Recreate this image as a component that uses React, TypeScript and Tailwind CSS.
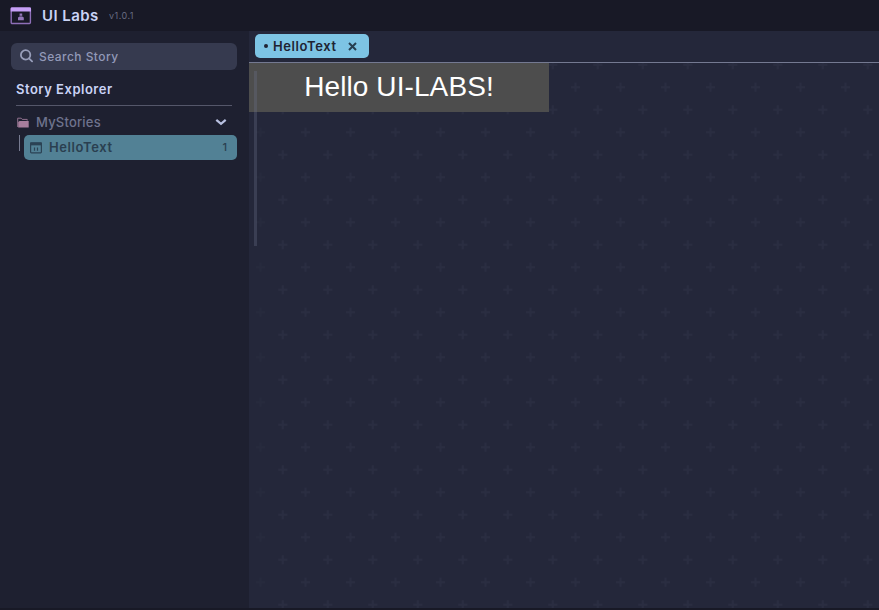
import React from "react";

function LogoIcon() {
  return (
    <svg className="h-[18px] w-[22px]" viewBox="0 0 22 18" fill="none">
      <rect x="1.2" y="1" width="19.2" height="15.5" rx="1" stroke="#8e6fb8" strokeWidth="1.4" />
      <path d="M1.5 0.4h18.7a.8.8 0 0 1 .8.8V4.5H.7V1.2a.8.8 0 0 1 .8-.8Z" fill="#c6a0f6" />
      <path d="M9.6 6.5h2.6v3l1.6 1v2.7H8v-2.7l1.6-1Z" fill="#9477bb" />
      <path d="M9.3 9.2h3.1" stroke="#181926" strokeWidth=".6" />
    </svg>
  );
}

function SearchIcon() {
  return (
    <svg className="h-[15px] w-[15px]" viewBox="0 0 15 15" fill="none" stroke="#989eba" strokeWidth="1.8">
      <circle cx="5.6" cy="5.9" r="4.7" />
      <path d="m9 9.4 3.1 3" strokeLinecap="round" />
    </svg>
  );
}

function FolderIcon() {
  return (
    <svg className="h-[11px] w-3 -translate-y-px" viewBox="0 0 12 11">
      <path d="M.7 10V1.2h3.5l1 1.2h5v1.2" fill="none" stroke="#91708d" />
      <path d="M2.5 4h9.2v6.5H1.2V5Z" fill="#a77e9d" />
    </svg>
  );
}

function StoryIcon() {
  return (
    <svg className="h-3 w-3" viewBox="0 0 12 12" fill="none" stroke="#2b4254">
      <rect x=".6" y=".9" width="10.8" height="10" rx=".8" strokeWidth="1.2" />
      <path d="M0 2h12" strokeWidth="2.7" />
      <path d="M4.5 5.5v3.2M7.5 5.5v3.2" strokeWidth="1.2" />
    </svg>
  );
}

function Backdrop() {
  return (
    <svg className="absolute inset-0 h-full w-full">
      <defs>
        <pattern id="plus" x="0" y="-10" width="45" height="45" patternUnits="userSpaceOnUse">
          <path d="M7 34.3h9M11.5 29.8v9M29.3 11.7h9M33.8 7.2v9" stroke="#2a2d41" strokeWidth="2" />
        </pattern>
      </defs>
      <rect width="100%" height="100%" fill="url(#plus)" />
      <rect width="21" height="100%" fill="#24273a" opacity=".5" />
    </svg>
  );
}

export default function App() {
  return (
    <div className="flex h-[610px] w-[879px] flex-col overflow-hidden bg-[#181926] font-['Inter',sans-serif] text-[#cad3f5]">
      <header className="flex h-[31px] shrink-0 items-center pl-2.5">
        <LogoIcon />
        <h1 className="ml-[10px] w-[57px] whitespace-nowrap text-[15px] leading-5 font-semibold tracking-[0.45px]">UI Labs</h1>
        <span className="ml-[10px] text-[9px] tracking-[0.5px] text-[#686c82]">v1.0.1</span>
      </header>
      <div className="flex h-[577px] shrink-0">
        <aside className="w-[249px] shrink-0 bg-[#1e2030] pt-3">
          <div className="ml-[11px] flex h-[27px] w-[226px] items-center rounded-md bg-[#363a4f] pl-[9px] text-[#9299b8]">
            <SearchIcon />
            <span className="ml-1 text-[12px] font-medium tracking-[0.45px]">Search Story</span>
          </div>
          <h2 className="ml-4 mt-2.5 flex h-5 items-center text-[13px] font-semibold tracking-[0.5px]">Story Explorer</h2>
          <div className="ml-4 mt-[5px] h-px w-[216px] bg-[#55576a]" />
          <div className="ml-[17px] mr-[22px] mt-1.5 flex h-[22px] items-center text-[#6e738d]">
            <FolderIcon />
            <span className="ml-[7px] text-[13px] font-medium tracking-[0.2px]">MyStories</span>
            <svg className="ml-auto h-2 w-3 -translate-y-px" viewBox="0 0 12 8" fill="none" stroke="#b8c0e0" strokeWidth="2.2">
              <path d="m1.3 1.8 4.7 4 4.7-4" />
            </svg>
          </div>
          <div className="ml-[19px] mt-px flex">
            <div className="h-4 w-px bg-[#777b91]" />
            <div className="ml-1 flex h-[25px] w-[213px] items-center rounded-[5px] bg-[#528195] pl-1.5 pr-2.5 text-[#2a3f50]">
              <StoryIcon />
              <span className="ml-[7px] text-[13px] font-semibold tracking-[0.6px]">HelloText</span>
              <span className="ml-auto text-[11px] font-medium">1</span>
            </div>
          </div>
        </aside>
        <main className="flex min-w-0 flex-1 flex-col bg-[#24273a]">
          <div className="flex h-8 shrink-0 border-b border-[#747991] pl-1.5 pt-[3px]">
            <div className="flex h-6 w-[114px] items-center rounded-[5px] bg-[#7dc4e4] pl-[9px] text-[#202332]">
              <span className="h-1 w-1 rounded-full bg-[#202332]" />
              <span className="ml-[5px] pt-px text-[13px] font-semibold tracking-[0.6px]">HelloText</span>
              <svg className="ml-auto mr-3 h-[9px] w-[9px]" viewBox="0 0 9 9" stroke="#263f50" strokeWidth="2">
                <path d="m1 1 7 7M8 1 1 8" />
              </svg>
            </div>
          </div>
          <section className="relative min-h-0 flex-1">
            <Backdrop />
            <div className="relative flex h-[49px] w-[300px] items-center justify-center bg-[#4d4d4d] pb-0.5 font-['Liberation_Sans',sans-serif] text-[28px] leading-none tracking-[0.1px] text-white">
              Hello UI-LABS!
            </div>
            <div className="absolute left-[5px] top-2 h-[175px] w-[3px] bg-[#6e738d]/30" />
          </section>
        </main>
      </div>
    </div>
  );
}
